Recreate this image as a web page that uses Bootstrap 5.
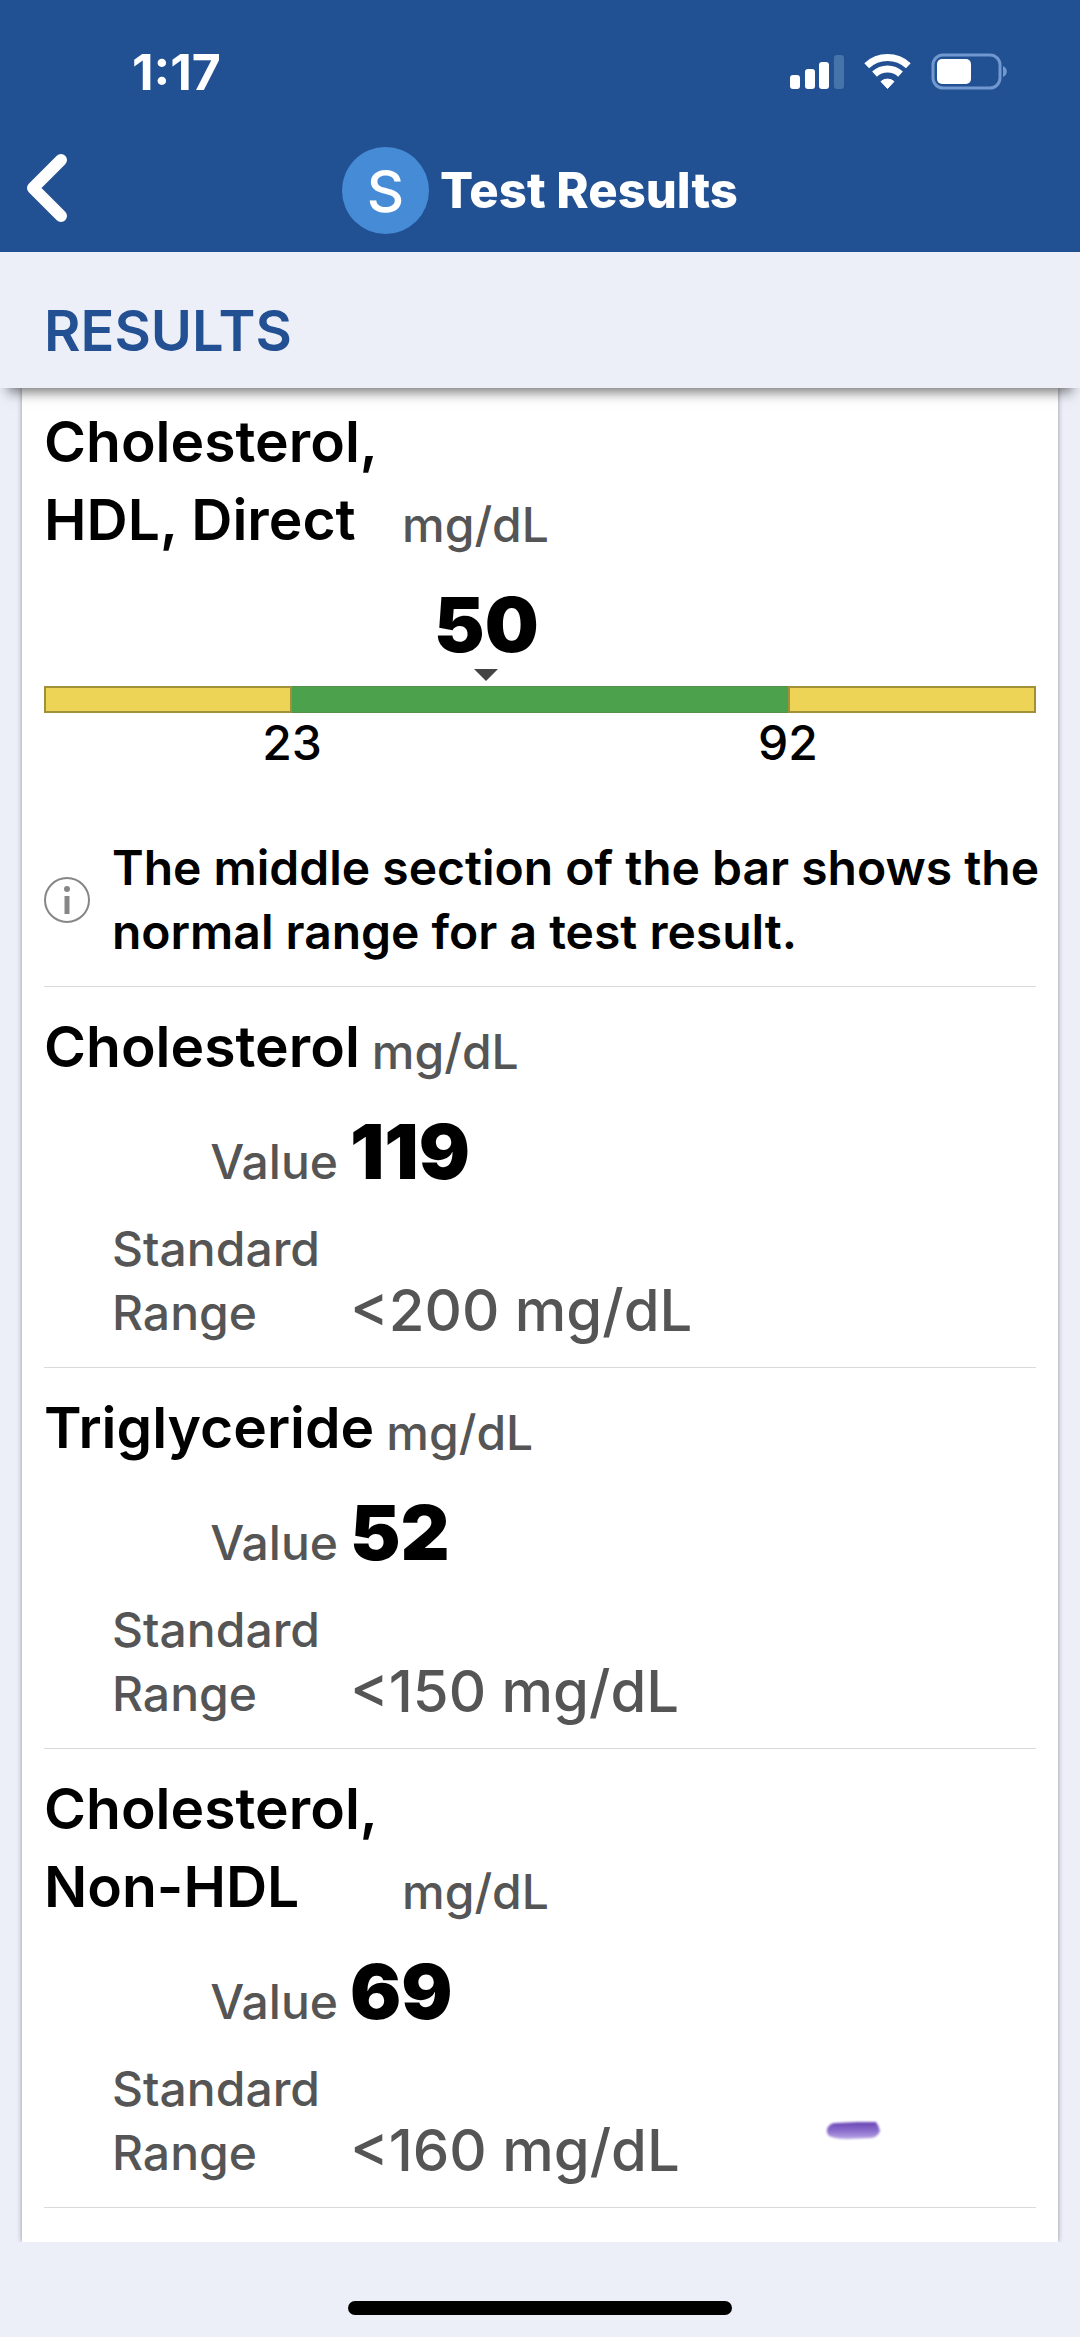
<!DOCTYPE html>
<html lang="en">
<head>
<meta charset="utf-8">
<meta name="viewport" content="width=device-width, initial-scale=1">
<title>Test Results</title>
<link href="https://cdn.jsdelivr.net/npm/bootstrap@5.3.0/dist/css/bootstrap.min.css" rel="stylesheet">
<style>
  body { background: #eceff8; color: #000; font-family: Inter, "Liberation Sans", sans-serif; font-size: 48px; font-weight: 500; line-height: 64px; }
  .app-top { background: #215093; color: #fff; height: 252px; }
  .status-row { height: 144px; padding: 0 66px 0 132px; font-weight: 700; font-size: 50px; }
  .title-row { height: 108px; padding-top: 3px; }
  .title-row h1 { font-size: 49px; line-height: 64px; font-weight: 800; }
  .title-group { gap: 11px; }
  .back-btn { left: 20px; top: 0; line-height: 0; }
  .avatar { width: 87px; height: 87px; background: #468bd5; font-size: 58px; }
  .section-bar { background: #eceff8; height: 136px; padding: 46px 44px 0; box-shadow: 0 12px 12px -8px rgba(0,0,0,.55); }
  .section-bar h2 { color: #225093; font-size: 56px; line-height: 66px; font-weight: 600; }
  .sheet { background: #fff; margin: 0 22px; padding: 15px 22px 34px; box-shadow: 0 0 5px rgba(0,0,0,.4); }
  .entry { padding: 21px 0 22px; border-bottom: 1px solid #d9dadc; }
  .entry-first { padding-top: 0; }
  .test-head { gap: 12px; }
  .test-name { font-size: 57px; line-height: 78px; font-weight: 600; max-width: 346px; }
  .unit { line-height: 68px; }
  .soft { color: #555; }
  .figure-value { font-size: 76px; line-height: 90px; font-weight: 900; }
  .gauge-top { margin-top: 20px; }
  .gauge-pin { width: 120px; }
  .gauge { height: 27px; margin-top: 5px; }
  .gauge .low, .gauge .high { background: #edd457; border: 2px solid #a09139; width: 25%; }
  .gauge .mid { background: #4ca14c; border: solid #56904c; border-width: 1px 0; }
  .gauge-scale { display: grid; grid-template-columns: 50% 50%; line-height: 56px; padding-top: 2px; }
  .hint { gap: 22px; padding-top: 65px; margin-right: -8px; font-weight: 600; }
  .info-list { padding-left: 68px; padding-top: 20px; }
  .info-list dt { width: 226px; font-weight: 500; }
  .info-list > div { gap: 12px; }
  .info-list > div + div { margin-top: 21px; }
  .range-value { font-size: 58px; line-height: 70px; }
  .pen-mark { right: 153px; bottom: 64px; }
  .home-zone { height: 95px; padding-top: 59px; }
  .home-bar { width: 384px; height: 14px; background: #000; }
</style>
</head>
<body class="d-flex flex-column min-vh-100">
<header class="app-top">
  <div class="status-row d-flex align-items-center justify-content-between">
    <span>1:17</span>
    <svg width="224" height="40" viewBox="0 0 224 40" role="img" aria-label="Signal, Wi-Fi and battery">
      <g fill="#fff">
        <rect x="0" y="23" width="10" height="14" rx="3"/><rect x="15" y="17" width="10" height="20" rx="3"/><rect x="29" y="10" width="10" height="27" rx="3"/>
        <rect x="44" y="3" width="10" height="34" rx="3" fill="#4474a8"/>
      </g>
      <g fill="none" stroke="#fff" stroke-width="7">
        <path d="M76.7 13.7a30.5 30.5 0 0 1 41.6 0"/><path d="M84.5 22.1a19 19 0 0 1 26 0"/>
      </g>
      <path d="M97.5 36.5 91 29.5a10 10 0 0 1 13 0z" fill="#fff" stroke="#fff" stroke-width="1" stroke-linejoin="round"/>
      <rect x="143" y="3" width="67" height="33" rx="10" fill="none" stroke="#7199d0" stroke-width="3"/>
      <rect x="147" y="7" width="34" height="25" rx="5" fill="#fff"/>
      <path d="M213 14c5 2 5 9 0 11z" fill="#7199d0"/>
    </svg>
  </div>
  <div class="title-row position-relative d-flex justify-content-center align-items-start">
    <button class="back-btn btn p-0 border-0 position-absolute" type="button" aria-label="Back">
      <svg width="54" height="84" viewBox="0 0 54 84"><path d="M41 16 13 44l28 28" fill="none" stroke="#fff" stroke-width="12" stroke-linecap="round" stroke-linejoin="round"/></svg>
    </button>
    <div class="title-group d-flex align-items-center">
      <span class="avatar rounded-circle d-flex justify-content-center align-items-center">S</span>
      <h1 class="m-0">Test Results</h1>
    </div>
  </div>
</header>
<div class="section-bar position-relative z-1"><h2 class="m-0">RESULTS</h2></div>
<main class="flex-grow-1 overflow-hidden d-flex flex-column">
  <div class="sheet flex-grow-1">
    <section class="entry entry-first">
      <div class="test-head d-flex align-items-end"><h3 class="test-name m-0">Cholesterol, HDL, Direct</h3><span class="unit soft">mg/dL</span></div>
      <div class="gauge-top"><div class="gauge-pin text-center" style="margin-left:calc(44.6% - 60px)"><div class="figure-value">50</div><svg class="d-block mx-auto" width="24" height="12" viewBox="0 0 24 12" aria-hidden="true"><path d="M0 0h24L12 12z" fill="#444"/></svg></div></div>
      <div class="gauge d-flex"><div class="low"></div><div class="mid flex-grow-1"></div><div class="high"></div></div>
      <div class="gauge-scale text-center"><span>23</span><span>92</span></div>
      <div class="hint d-flex align-items-center">
        <svg class="flex-shrink-0" width="46" height="46" viewBox="0 0 46 46" aria-hidden="true"><circle cx="23" cy="23" r="22" fill="none" stroke="#868686" stroke-width="2"/><circle cx="23" cy="12" r="3" fill="#868686"/><path d="M23 19v18" stroke="#868686" stroke-width="5"/></svg>
        <p class="m-0">The middle section of the bar shows the normal range for a test result.</p>
      </div>
    </section>
    <section class="entry">
      <div class="test-head d-flex align-items-end"><h3 class="test-name m-0">Cholesterol</h3><span class="unit soft">mg/dL</span></div>
      <dl class="info-list m-0 soft">
        <div class="d-flex align-items-baseline"><dt class="text-end">Value</dt><dd class="figure-value text-black m-0">119</dd></div>
        <div class="d-flex align-items-end"><dt>Standard Range</dt><dd class="range-value m-0">&lt;200 mg/dL</dd></div>
      </dl>
    </section>
    <section class="entry">
      <div class="test-head d-flex align-items-end"><h3 class="test-name m-0">Triglyceride</h3><span class="unit soft">mg/dL</span></div>
      <dl class="info-list m-0 soft">
        <div class="d-flex align-items-baseline"><dt class="text-end">Value</dt><dd class="figure-value text-black m-0">52</dd></div>
        <div class="d-flex align-items-end"><dt>Standard Range</dt><dd class="range-value m-0">&lt;150 mg/dL</dd></div>
      </dl>
    </section>
    <section class="entry position-relative">
      <div class="test-head d-flex align-items-end"><h3 class="test-name m-0">Cholesterol, Non-HDL</h3><span class="unit soft">mg/dL</span></div>
      <dl class="info-list m-0 soft">
        <div class="d-flex align-items-baseline"><dt class="text-end">Value</dt><dd class="figure-value text-black m-0">69</dd></div>
        <div class="d-flex align-items-end"><dt>Standard Range</dt><dd class="range-value m-0">&lt;160 mg/dL</dd></div>
      </dl>
      <svg class="pen-mark position-absolute" width="60" height="24" viewBox="0 0 60 24" aria-hidden="true">
        <defs><linearGradient id="ink" x1="0" y1="0" x2="0" y2="1"><stop offset="0" stop-color="#6a45b5"/><stop offset=".5" stop-color="#8a6ccb"/><stop offset="1" stop-color="#b9a6e4"/></linearGradient><filter id="soften"><feGaussianBlur stdDeviation="0.8"/></filter></defs>
        <path d="M12 4 34 3 53 3Q56 7 57 12 54 19 48 19L24 20Q12 20 6 17 2 12 5 8 8 4 12 4z" fill="url(#ink)" filter="url(#soften)"/>
      </svg>
    </section>
  </div>
</main>
<footer class="home-zone"><div class="home-bar rounded-pill mx-auto"></div></footer>
<script src="https://cdn.jsdelivr.net/npm/bootstrap@5.3.0/dist/js/bootstrap.bundle.min.js"></script>
</body>
</html>
